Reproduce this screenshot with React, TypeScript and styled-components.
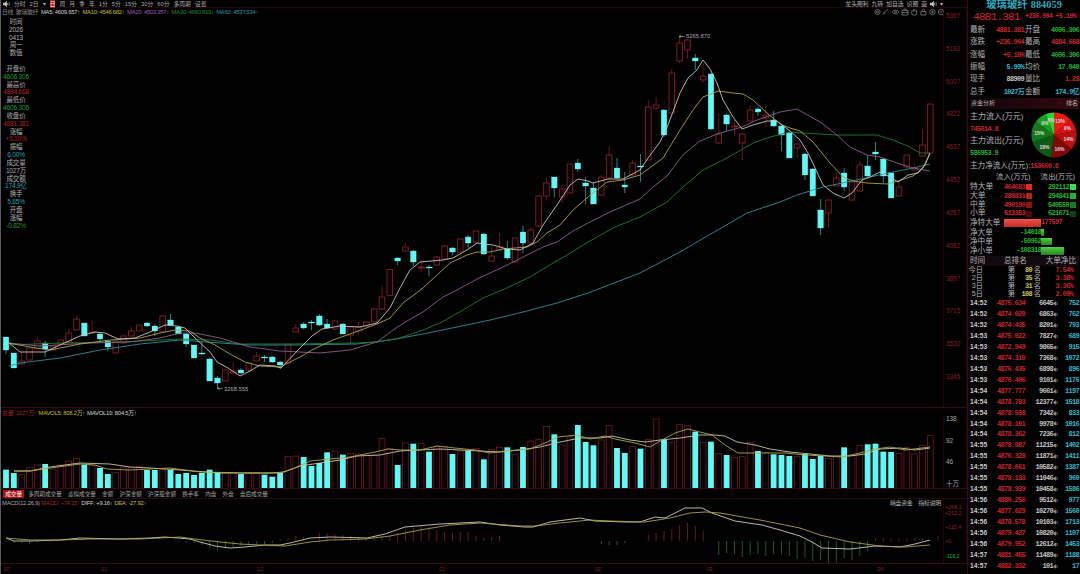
import * as React from "react";
import styled, { createGlobalStyle } from "styled-components";

const RED = "#a3242c";
const GREEN = "#1fae2c";
const CYAN = "#5ffbf6";
const FRAME = "#3a0a10";

const GlobalStyle = createGlobalStyle`
  * { box-sizing: border-box; }
  body {
    margin: 0;
    background: #000;
    overflow: hidden;
    font-family: "Liberation Sans", "Noto Sans CJK SC", sans-serif;
  }
`;

/* ---------- data ---------- */

// kind, body top, body bottom, high, low, volume bar top
type Candle = [string, number, number, number, number, number];

const candles: Candle[] = [
  ["d", 337, 350, 337, 354, 194], ["d", 353, 368, 353, 368, 204], ["u", 361, 364, 352, 365, 208],
  ["u", 348, 360, 348, 360, 187], ["u", 341, 349, 337, 349, 180], ["d", 343, 349, 341, 357, 177],
  ["u", 346, 350, 346, 350, 192], ["u", 340, 344, 339, 344, 180], ["u", 333, 342, 329, 342, 168],
  ["u", 319, 330, 316, 331, 160], ["d", 323, 336, 323, 336, 179], ["u", 332, 333, 321, 333, 182],
  ["d", 334, 339, 332, 342, 189], ["d", 341, 347, 341, 351, 207], ["u", 341, 353, 340, 354, 203],
  ["u", 336, 343, 335, 343, 187], ["u", 331, 336, 327, 336, 187], ["u", 325, 331, 325, 331, 185],
  ["d", 323, 326, 322, 327, 195], ["d", 326, 331, 324, 336, 195], ["u", 316, 332, 315, 333, 195],
  ["d", 320, 325, 314, 325, 195], ["d", 327, 334, 326, 334, 207], ["d", 334, 344, 333, 347, 204],
  ["d", 345, 358, 345, 358, 210], ["d", 353, 354, 342, 355, 204], ["d", 359, 381, 358, 381, 194],
  ["d", 378, 383, 376, 388, 201], ["u", 370, 381, 370, 381, 203], ["u", 371, 373, 363, 373, 203],
  ["d", 370, 373, 368, 374, 207], ["u", 363, 370, 363, 372, 203], ["u", 356, 361, 352, 361, 203],
  ["d", 357, 358, 355, 362, 209], ["d", 357, 362, 356, 363, 215], ["d", 362, 365, 361, 369, 204],
  ["u", 344, 363, 344, 363, 155], ["u", 328, 332, 324, 332, 153], ["d", 324, 328, 322, 329, 156],
  ["d", 322, 323, 320, 330, 183], ["d", 316, 325, 314, 326, 174], ["d", 324, 328, 319, 329, 142],
  ["u", 321, 329, 320, 330, 138], ["d", 324, 334, 323, 334, 149], ["u", 327, 335, 327, 344, 145],
  ["u", 327, 331, 322, 334, 147], ["u", 322, 326, 321, 326, 150], ["u", 309, 322, 308, 322, 150],
  ["u", 297, 309, 285, 310, 100], ["u", 269.5, 295.5, 269, 296, 130], ["d", 258, 261, 257, 265, 180],
  ["u", 247, 251, 243, 252, 114], ["d", 251, 262, 250, 266, 116], ["u", 267, 268, 260, 272, 115],
  ["d", 267, 268, 265, 276, 140], ["u", 257, 265, 256, 266, 125], ["u", 246, 259, 245, 260, 125],
  ["d", 248, 252, 247, 255, 147], ["u", 239, 252, 238, 252, 138], ["d", 237, 243, 235, 248, 137],
  ["u", 231, 242, 231, 243, 130], ["d", 234, 254, 233, 255, 163], ["u", 256, 261, 246, 261, 133],
  ["u", 247, 250, 233, 250, 127], ["d", 249, 258, 241, 260, 127], ["u", 238, 262, 238, 263, 148],
  ["d", 232, 243, 226, 253, 126], ["u", 230, 243, 227, 243, 108], ["u", 196, 226, 195, 227, 103],
  ["u", 183, 196, 178, 200, 64], ["d", 177, 188, 177, 197, 88], ["u", 189, 197, 185, 203, 120],
  ["u", 164, 193, 164, 194, 95], ["d", 163, 169, 159, 172, 60], ["d", 183, 186, 177, 204, 111],
  ["d", 188, 204, 182, 204, 121], ["u", 177, 195, 175, 196, 105], ["u", 155, 178, 147, 178, 62],
  ["d", 168, 178, 158, 179, 129], ["d", 185, 187, 172, 193, 144], ["u", 163, 175, 160, 176, 125],
  ["d", 166, 167, 154, 182, 131], ["u", 107, 160, 100, 160, 103], ["u", 105, 108, 97, 110, 42],
  ["d", 110, 135, 109, 137, 103], ["u", 73, 113, 69, 113, 112], ["u", 43, 61, 36, 63, 58],
  ["u", 40, 50, 39, 59, 62], ["d", 58, 61, 54, 70, 80], ["u", 76, 80, 63, 83, 112],
  ["d", 74, 129, 73, 130, 110], ["u", 134, 143, 113, 144, 145], ["d", 115, 124, 113, 131, 150],
  ["u", 126, 127, 120, 136, 157], ["u", 134, 143, 133, 160, 155], ["u", 110, 121, 105, 121, 112],
  ["d", 109, 112, 107, 116, 138], ["u", 115, 118, 105, 127, 143], ["d", 120, 126, 111, 127, 148],
  ["d", 126, 135, 125, 151, 150], ["d", 133, 158, 132, 158, 153], ["u", 144, 148, 143, 158, 155],
  ["d", 154, 175, 153, 180, 147], ["d", 169, 196, 168, 196, 162], ["d", 210, 228, 199, 235, 153],
  ["u", 200, 213, 199, 228, 160], ["u", 178, 186, 172, 187, 155], ["d", 173, 187, 168, 191, 127],
  ["u", 182, 200, 182, 201, 150], ["u", 165, 191, 161, 191, 122], ["d", 166, 176, 155, 177, 118],
  ["d", 152, 154, 142, 160, 116], ["d", 159, 176, 159, 183, 140], ["d", 173, 198, 173, 198, 141],
  ["u", 187, 196, 180, 196, 145], ["u", 155, 167, 155, 168, 128], ["u", 168, 170, 164, 171, 147],
  ["u", 145, 156, 129, 157, 122], ["u", 104, 153, 104, 153, 92],
];

const candleX = (i: number) => 6 + i * 7.833;

const averages = [
  { color: "#2f8f9c", points: "9,366 20,363 60,358 100,350 140,344 180,340 220,343 250,345 290,345 357,344 390,340 423,334 457,327 490,320 523,312 557,303 588,293 640,273 680,252 702,239 723,227 747,213 780,202 797,195 823,187 847,182 870,177 893,172 913,168 930,164" },
  { color: "#1f7a30", points: "9,345 60,343 120,342 180,339 210,340 240,344 290,344 357,343 377,342 400,338 423,330 440,323 463,310 483,298 507,288 530,277 553,263 567,255 588,242 615,227 640,217 667,202 683,187 703,170 727,158 753,143 770,137 790,132 803,133 837,135 877,135 893,140 910,147 920,153 930,153" },
  { color: "#8d5c92", points: "9,343 40,346 90,343 130,342 160,338 180,333 195,333 220,338 250,347 280,351 320,353 350,350 360,347 377,342 393,330 407,321 423,312 443,297 457,290 477,279 503,267 523,257 543,247 557,242 573,231 588,223 610,212 640,199 653,187 667,176 683,155 700,141 717,134 742,127 757,120 780,112 797,109 820,122 837,135 850,147 867,155 880,157 897,163 913,168 930,171" },
  { color: "#a9a34c", points: "9,343 30,347 50,350 80,344 110,340 140,338 160,333 175,330 190,331 200,338 215,345 230,354 245,362 260,366 280,367 300,357 312,350 333,340 350,334 377,324 390,318 403,303 423,288 437,275 450,263 467,255 477,252 490,252 503,249 527,247 537,242 547,233 560,225 573,210 588,197 607,182 623,180 640,175 663,158 680,130 693,110 703,97 718,91 733,93 743,94 753,100 767,113 780,124 790,128 800,131 813,142 830,163 843,177 853,181 867,183 887,184 898,181 913,176 923,168 930,153" },
  { color: "#c9c3bd", points: "9,343 20,352 45,352 60,345 80,336 95,332 105,333 118,339 135,338 150,332 165,325 177,326 185,328 195,338 210,352 217,362 228,368 240,376 250,371 260,365 275,366 281,368 300,348 312,336 322,329 340,326 360,327 377,323 390,308 400,288 410,270 420,262 443,260 453,258 467,250 477,243 493,245 507,249 520,250 533,243 543,225 557,205 570,185 578,179 588,181 593,183 608,179 623,179 640,170 648,158 660,142 668,125 680,93 688,78 697,70 703,60 710,69 717,83 723,100 733,117 742,129 753,125 767,121 777,121 790,131 800,140 808,153 817,172 823,185 833,193 844,198 852,193 862,180 870,177 880,172 890,177 898,182 908,175 918,173 925,165 930,153" },
];

const volumeAverages = [
  { color: "#c8c6a8", points: "14,471 30,471 50,467 80,463 110,464 130,467 150,468 180,470 220,473 270,473 284,472 300,466 320,463 340,460 357,456 380,455 400,451 420,450 440,449 460,450 480,451 500,452 520,450 540,447 560,442 580,438 600,438 612,436 630,440 645,442 660,440 680,438 700,435 715,435 725,436 737,442 755,445 770,449 790,452 810,454 830,456 850,456 865,454 880,449 900,448 915,450 930,448" },
  { color: "#aaa74a", points: "14,471 30,471 50,468 80,464 95,465 107,469 130,470 170,468 200,472 250,473 280,473 295,468 310,461 330,459 350,457 375,452 388,449 400,450 420,450 437,446 455,448 475,450 490,453 505,451 530,449 545,443 558,437 577,435 590,439 605,436 615,439 635,443 650,447 662,440 675,433 688,429 700,432 712,435 725,445 738,453 765,453 785,453 805,455 825,456 842,457 860,453 875,449 890,447 905,450 930,447" },
];

const diffLine = "6,538 14,541 30,541 60,540 80,538 120,539 150,538 165,537 190,539 200,542 215,546 230,548 245,547 265,545 280,545 290,543 310,538 330,537 367,538 385,534 405,527 440,524 480,522 500,525 525,527 533,527 550,522 580,518 595,521 625,522 640,522 655,517 665,518 675,513 685,508 702,508 712,513 735,521 762,525 780,530 800,536 812,542 822,548 850,549 875,546 900,547 915,544 930,540";
const deaLine = "6,538 30,540 60,540 90,539 140,539 180,537 195,539 220,542 240,544 260,545 285,546 310,542 330,540 365,539 390,536 420,530 450,525 480,523 520,526 535,526 560,523 590,520 610,521 645,522 670,518 690,513 705,512 720,513 760,520 800,528 820,535 850,542 880,546 905,547 930,545";

// first candle index, then the offsets from the zero line (positive is up)
const macdBars: [number, number[]][] = [
  [0, [-1, -2, -2, -3, -1]],
  [22, [-1, -2, -2, -4, -7, -9, -8, -6, -5, -4, -3, -3, -2, 2, 3, 5, 4]],
  [40, [8, 8, 7, 6, 5, 4, 3, 3, 5, 6, 8, 11, 13, 15, 14, 11, 9, 8, 9, 9, 5, 4, 4, 5]],
  [76, [-3, -4, -4, -2]],
  [82, [6, 8, 10, 12, 16, 18, 15, 10, 0, -14, -12, -13, -16, -14, -13, -15, -13, -13, -15, -18, -17, -20, -19, -24, -22, -17, -19, -15, -10, 3, 3, 3, 3, 3, 3, 3, 0, 5, 8]],
];

const periods = ["分时", "2日", "▾", "日", "周", "月", "季", "年", "1分", "5分", "15分", "30分", "60分", "多周期", "设置"];

const legend = [
  ["日线", "#8d8d8d"], ["玻璃玻纤", "#8d8d8d"], ["MA5: 4609.657↑", "#d2d2d2"], ["MA10: 4546.682↑", "#c2bf2c"],
  ["MA20: 4503.357↑", "#a455ba"], ["MA30: 4660.919↓", "#1f8a30"], ["MA60: 4537.534↑", "#2f93a8"],
];

const cursorLines = [
  ["时间", "w"], ["2026", "w"], ["0413", "w"], ["周一", "w"], ["数值", "w"], ["", "w"], ["开盘价", "w"], ["4606.306", "g"],
  ["最高价", "w"], ["4884.668", "r"], ["最低价", "w"], ["4606.306", "g"], ["收盘价", "w"], ["4881.381", "r"], ["涨幅", "w"],
  ["+5.10%", "r"], ["振幅", "w"], ["6.00%", "c"], ["成交量", "w"], ["1027万", "w"], ["成交额", "w"], ["174.9亿", "c"],
  ["换手", "w"], ["5.65%", "c"], ["开盘", "w"], ["涨幅", "w"], ["-0.82%", "g"],
];

const priceAxis = ["5367", "5192", "5007", "4822", "4637", "4452", "4267", "4082", "3897", "3715", "3530", "3345"];

const indicatorTabs = ["成交量", "多周期成交量", "虚拟成交量", "金额", "沪深金额", "沪深股金额", "换手率", "内盘", "外盘", "盘后成交量"];

const quotes = [
  ["最新", "4881.381", "r", "开盘", "4606.306", "g"],
  ["涨跌", "+236.904", "r", "最高", "4884.668", "r"],
  ["涨幅", "+5.10%", "r", "最低", "4606.306", "g"],
  ["振幅", "5.99%", "c", "均价", "17.040", "g"],
  ["现手", "88909", "w", "量比", "1.28", "r"],
  ["总手", "1027万", "c", "金额", "174.9亿", "c"],
];

const orderFlow = [
  ["特大单", "464683", "#e02a24", "292112", "#3be048"],
  ["大单", "280831", "#b81f1c", "294841", "#25b030"],
  ["中单", "490190", "#8a1512", "540550", "#167a1e"],
  ["小单", "513353", "#4a0c0a", "621671", "#0d4212"],
];

const netFlow = [
  { label: "净特大单", value: "177597", left: 37, right: 0 },
  { label: "净大单", value: "-14018", left: 0, right: 3 },
  { label: "净中单", value: "-50962", left: 0, right: 11 },
  { label: "净小单", value: "-108318", left: 0, right: 23 },
];

const ranks = [
  ["今日", "80", "7.54%"], ["2日", "35", "3.38%"], ["3日", "31", "3.36%"], ["5日", "108", "2.09%"],
];

const ticks = [
  ["14:52", "4875.634", "6645", "752"], ["14:52", "4874.020", "6863", "762"], ["14:52", "4874.435", "8201", "793"],
  ["14:53", "4875.022", "7827", "689"], ["14:53", "4872.949", "9865", "915"], ["14:53", "4874.310", "7368", "1072"],
  ["14:53", "4876.435", "6898", "896"], ["14:53", "4876.406", "9101", "1176"], ["14:54", "4877.777", "9661", "1197"],
  ["14:54", "4878.783", "12377", "1518"], ["14:54", "4878.508", "7342", "833"], ["14:54", "4878.101", "9978", "1016"],
  ["14:54", "4878.362", "7236", "812"], ["14:55", "4878.087", "11215", "1402"], ["14:55", "4876.328", "11871", "1411"],
  ["14:55", "4878.661", "10582", "1387"], ["14:55", "4878.133", "11046", "960"], ["14:55", "4878.939", "10458", "1586"],
  ["14:56", "4880.256", "9512", "977"], ["14:56", "4877.629", "10270", "1560"], ["14:56", "4878.578", "10103", "1713"],
  ["14:56", "4879.437", "10820", "1107"], ["14:56", "4879.952", "12612", "1453"], ["14:57", "4881.455", "11489", "1188"],
  ["14:57", "4882.332", "101", "17"],
];

const slices = [
  [13, "#f01818"], [9, "#d81414"], [14, "#b81010"], [16, "#7c0a0a"],
  [18, "#0d5a14"], [15, "#13781b"], [9, "#1a9c24"], [6, "#28d834"],
] as [number, string][];

/* ---------- layout ---------- */

const tones: Record<string, string> = { r: "#c4262e", g: "#22b032", c: "#35b6cc", w: "#c4c4c4", y: "#c9c56a" };

const Screen = styled.div`
  display: flex;
  width: 1080px;
  height: 574px;
  background: #000;
  color: #b4b4b4;
  white-space: nowrap;
`;

const ChartColumn = styled.main`
  width: 967px;
  display: flex;
  flex-direction: column;
  border-left: 1px solid #5a5a60;
`;

const Toolbar = styled.header`
  height: 8px;
  padding: 0 24px 0 2px;
  display: flex;
  align-items: center;
  justify-content: space-between;
  font-size: 5.8px;
  line-height: 8px;
  border-bottom: 1px solid #22060a;
`;

const Group = styled.div<{ $gap: number }>`
  display: flex;
  align-items: center;
  gap: ${props => props.$gap}px;
`;

const Period = styled.span<{ $active?: boolean }>`
  color: ${props => (props.$active ? "#fff" : "#a8a8a8")};
  background: ${props => (props.$active ? "#b3201c" : "transparent")};
`;

const Legend = styled.div`
  height: 8px;
  padding: 0 23px 0 1px;
  display: flex;
  align-items: center;
  justify-content: space-between;
  font-size: 5.9px;
  letter-spacing: -0.28px;
  line-height: 8px;
`;

const Tinted = styled.span<{ $color: string }>`
  color: ${props => props.$color};
`;

const Pane = styled.section<{ $height: number }>`
  position: relative;
  display: flex;
  height: ${props => props.$height}px;
  border-bottom: 1px solid ${FRAME};
`;

const Plot = styled.svg`
  display: block;
  flex: none;
  width: 942px;
  height: 100%;
`;

const Axis = styled.div<{ $color: string }>`
  flex: 1;
  display: flex;
  flex-direction: column;
  justify-content: space-between;
  padding: 0 0 0 2px;
  border-left: 1px solid #24060a;
  border-right: 1px solid #1c0508;
  font-size: 6.4px;
  line-height: 8px;
  color: ${props => props.$color};
`;

const PriceAxis = styled(Axis)`
  padding-bottom: 26px;
  margin-top: -4px;
`;

const VolumeAxis = styled(Axis)`
  margin-top: -2px;
`;

const MacdAxis = styled(Axis)`
  justify-content: flex-start;
  margin-top: -4px;
  padding-left: 1px;
  font-size: 5.7px;
  letter-spacing: -0.2px;
`;

const AxisMark = styled.span<{ $height: number }>`
  flex: none;
  height: ${props => props.$height}px;
`;

const CursorPanel = styled.aside`
  position: absolute;
  left: 0;
  top: 2px;
  width: 30px;
  display: flex;
  flex-direction: column;
  align-items: center;
  font-size: 6.5px;
  letter-spacing: -0.15px;
`;

const CursorLine = styled.div<{ $tone: string }>`
  height: 7.83px;
  line-height: 7.83px;
  color: ${props => tones[props.$tone]};
  opacity: 0.88;
`;

const PaneHeader = styled.div<{ $height: number }>`
  height: ${props => props.$height}px;
  padding: 0 26px 0 1px;
  display: flex;
  align-items: center;
  justify-content: space-between;
  font-size: 5.9px;
  letter-spacing: -0.25px;
  line-height: 8px;
`;

const Tabs = styled.nav`
  height: 10px;
  padding: 1px 0 0 2px;
  display: flex;
  align-items: center;
  border-bottom: 1px solid #2a070c;
  font-size: 5.6px;
  line-height: 8px;
`;

const Tab = styled.span<{ $active?: boolean }>`
  padding: 0 2.2px;
  margin-right: 1.8px;
  color: ${props => (props.$active ? "#fff" : "#a4a4a4")};
  background: ${props => (props.$active ? "#a5120f" : "transparent")};
`;

const Dates = styled.footer`
  flex: 1;
  display: flex;
  align-items: center;
  padding-left: 2px;
  font-size: 6px;
  line-height: 8px;
  color: #7d1c2c;
`;

const DateLabel = styled.span<{ $width: number }>`
  width: ${props => props.$width}px;
`;

const Side = styled.aside`
  width: 113px;
  padding: 0 1px 0 2px;
  border-left: 1px solid ${FRAME};
  display: flex;
  flex-direction: column;
  font-size: 7.6px;
`;

const Row = styled.div<{ $height: number }>`
  flex: none;
  height: ${props => props.$height}px;
  line-height: ${props => props.$height}px;
  display: flex;
  align-items: center;
`;

const Title = styled(Row)`
  justify-content: center;
  gap: 3px;
  padding-right: 1px;
  color: #2ba9bd;
  font-family: "Liberation Serif", "Noto Sans CJK SC", serif;
  font-size: 10.4px;
  font-weight: bold;
`;

const Num = styled.span<{ $tone?: string; $size?: number }>`
  font-family: "Liberation Mono", "Noto Sans CJK SC", monospace;
  font-size: ${props => props.$size || 7}px;
  letter-spacing: -0.1em;
  font-weight: bold;
  text-align: right;
  color: ${props => tones[props.$tone || "w"]};
`;

const PriceRow = styled(Row)`
  justify-content: space-between;
  padding: 0 3px 0 3px;
`;

const Price = styled(Num)`
  font-weight: normal;
`;

const QuoteRow = styled(Row)`
  display: grid;
  grid-template-columns: 16px 38px 1px 15px 1fr;
`;

const SectionBar = styled(Row)`
  justify-content: space-between;
  padding: 0 1px;
  font-size: 6px;
  background: linear-gradient(90deg, #10050a, #35070f);
`;

const FlowSummary = styled.div`
  height: 52px;
  padding-top: 2px;
  display: flex;
  font-size: 8px;
`;

const FlowText = styled.div`
  width: 61px;
  flex: none;
`;

const Pie = styled.svg`
  width: 46px;
  height: 46px;
  margin-top: 1.5px;
`;

const FlowHeader = styled(Row)`
  justify-content: space-between;
  padding: 0 4px 0 26px;
  font-size: 7.4px;
`;

const FlowRow = styled(Row)`
  display: grid;
  grid-template-columns: 24px 31px 7px 37px 7px;
  font-size: 7.8px;
`;

const Swatch = styled.i<{ $color: string }>`
  width: 5.5px;
  height: 6px;
  margin-left: 1px;
  background: ${props => props.$color};
`;

const NetRow = styled(Row)`
  display: grid;
  grid-template-columns: 34px 37px 1fr;
`;

const NetCell = styled.div<{ $end?: boolean }>`
  height: 100%;
  display: flex;
  align-items: center;
  justify-content: ${props => (props.$end ? "flex-end" : "flex-start")};
`;

const NetBar = styled.div<{ $positive?: boolean }>`
  height: 7.4px;
  background: ${props => (props.$positive ? "linear-gradient(#f0524a, #c22a22)" : "linear-gradient(#55cc48, #23851d)")};
`;

const RankHeader = styled(Row)`
  justify-content: space-between;
  padding-right: 3px;
  background: #120a0e;
`;

const RankRow = styled(Row)`
  display: grid;
  grid-template-columns: 13px 32px 17px 9px 1fr;
  justify-items: end;
  padding-right: 6px;
  font-size: 7.2px;
`;

const TickRow = styled(Row)`
  display: grid;
  grid-template-columns: 18px 37px 28px 7px 1fr;
`;

const TickTime = styled.span`
  font-size: 6.7px;
  font-weight: bold;
  color: #c8c8c8;
`;

/* ---------- parts ---------- */

const Speaker = () => (
  <svg width="7" height="6" viewBox="0 0 8 6">
    <path d="M0 2h2l2-2v6l-2-2H0z M5 1.5v3 M7 1v4" fill="#d0d0d0" stroke="#d0d0d0" strokeWidth=".7" />
  </svg>
);

const TickArrow = () => (
  <svg width="6" height="5" viewBox="0 0 6 5">
    <path d="M0.500 2.500L2.500 .8V4.200zM2.500 1.800H5M2.500 3.200H5" fill="#9a9a9a" stroke="#9a9a9a" strokeWidth=".6" />
  </svg>
);

const ToolIcons = () => (
  <svg width="70" height="8" viewBox="0 0 70 8" fill="none" stroke="#8c8c8c" strokeWidth=".7">
    <circle cx="3.5" cy="4" r="2.6" />
    <circle cx="3.5" cy="4" r="1" />
    <path d="M9 6.5l1-2 4-3.3M10 4.8l1 .8" />
    <path d="M18 4q3.5-4 7 0q-3.5 4-7 0z" />
    <circle cx="21.5" cy="4" r="1" />
    <path d="M28 2.5h6v4.5h-6zM29.5 2.5l.5-1.5h2l.5 1.5M28 4.5h6" />
    <path d="M38 4v-2M39.5 3.5v-2.5M41 3.5v-2.5M42.5 4.5v-2.5M37 4l1.5 3h3.5l.8-3" />
    <path d="M47 3.5h5v3.5h-5zM48 3.5v-1.3q1.5-2.4 3 0v1.3" />
    <circle cx="58.5" cy="4" r="2.7" />
    <path d="M57 4h3M58.5 2.5v3" />
    <circle cx="67" cy="4" r="2.7" />
    <path d="M65.5 4h3" />
  </svg>
);

const Candles = () => (
  <>
    {candles.map(([kind, top, bottom, high, low], i) => {
      const x = candleX(i);
      const down = kind === "d";
      const flat = bottom - top <= 1;
      return (
        <g key={i} stroke={down ? "#45b8b4" : "#8c2430"} strokeWidth=".7">
          <path d={`M${x} ${high}V${top}M${x} ${bottom}V${low}`} />
          <rect
            x={x - 2.8}
            y={top}
            width={flat ? 6 : 5.6}
            height={Math.max(bottom - top, 1)}
            fill={down ? CYAN : "#0a0103"}
            stroke={down ? CYAN : "#8c2430"}
            strokeWidth={down ? 0.3 : 0.8}
          />
        </g>
      );
    })}
  </>
);

const VolumeBars = () => (
  <>
    {candles.map(([kind, , , , , volume], i) => {
      const top = 405 + volume / 3;
      const down = kind === "d";
      return (
        <rect
          key={i}
          x={candleX(i) - 2.9}
          y={top}
          width="5.8"
          height={488.3 - top}
          fill={down ? CYAN : "#080103"}
          stroke={down ? "none" : "#7a1c28"}
          strokeWidth=".7"
        />
      );
    })}
  </>
);

const MacdBars = () => (
  <g strokeWidth=".7">
    {macdBars.map(([start, values]) => values.map((value, i) => {
      const x = candleX(start + i);
      return (
        <path
          key={start + i}
          d={`M${x} 541V${541 - value}`}
          stroke={value > 0 ? "#8c2430" : "#2c8038"}
        />
      );
    }))}
  </g>
);

const FlowPie = () => {
  let angle = -Math.PI / 2;
  return (
    <Pie viewBox="-23 -23 46 46">
      {slices.map(([percent, color], i) => {
        const next = angle + (percent / 100) * Math.PI * 2;
        const mid = (angle + next) / 2;
        const arc = `M0 0L${22.5 * Math.cos(angle)} ${22.5 * Math.sin(angle)}A22.5 22.5 0 0 1 ${22.5 * Math.cos(next)} ${22.5 * Math.sin(next)}Z`;
        angle = next;
        return (
          <g key={i}>
            <path d={arc} fill={color} />
            <text x={15 * Math.cos(mid)} y={15 * Math.sin(mid) + 2} fontSize="5" fontWeight="bold" fill="#e4d8d8" textAnchor="middle">
              {percent}%
            </text>
          </g>
        );
      })}
    </Pie>
  );
};

const SidePanel = () => (
  <Side>
    <Title $height={9}><span>玻璃玻纤</span><span>884059</span></Title>
    <PriceRow $height={15}>
      <Price $tone="r" $size={11.6}>4881.381</Price>
      <Num $tone="r" $size={6.8}>+236.904 +5.10%</Num>
    </PriceRow>
    {quotes.map(([label, value, tone, label2, value2, tone2]) => (
      <QuoteRow key={label} $height={12.35}>
        <span>{label}</span>
        <Num $tone={tone}>{value}</Num>
        <i />
        <span>{label2}</span>
        <Num $tone={tone2}>{value2}</Num>
      </QuoteRow>
    ))}
    <SectionBar $height={10.5}>
      <span>资金分析</span>
      <Group $gap={5}><Tinted $color={RED}>↑</Tinted><span>排名</span></Group>
    </SectionBar>
    <FlowSummary>
      <FlowText>
        <Row $height={12.3}>主力流入(万元)</Row>
        <Row $height={12.3}><Num $tone="r">745614.8</Num></Row>
        <Row $height={12.3}>主力流出(万元)</Row>
        <Row $height={12.3}><Num $tone="g">586953.9</Num></Row>
      </FlowText>
      <FlowPie />
    </FlowSummary>
    <Row $height={10.5}>主力净流入(万元):<Num $tone="r">158660.8</Num></Row>
    <FlowHeader $height={12}><span>流入(万元)</span><span>流出(万元)</span></FlowHeader>
    {orderFlow.map(([label, inflow, inColor, outflow, outColor]) => (
      <FlowRow key={label} $height={8.8}>
        <span>{label}</span>
        <Num $tone="r">{inflow}</Num>
        <Swatch $color={inColor} />
        <Num $tone="g">{outflow}</Num>
        <Swatch $color={outColor} />
      </FlowRow>
    ))}
    {netFlow.map(item => (
      <NetRow key={item.label} $height={9.4}>
        <span>{item.label}</span>
        <NetCell $end>
          {item.left ? <NetBar $positive style={{ width: item.left }} /> : <Num $tone="g">{item.value}</Num>}
        </NetCell>
        <NetCell>
          {item.right ? <NetBar style={{ width: item.right }} /> : <Num $tone="r">{item.value}</Num>}
        </NetCell>
      </NetRow>
    ))}
    <RankHeader $height={10}><span>时间</span><span>总排名</span><span>大单净比</span></RankHeader>
    {ranks.map(([label, rank, ratio]) => (
      <RankRow key={label} $height={8.1}>
        <span>{label}</span>
        <span>第</span>
        <Num $tone="y">{rank}</Num>
        <span>名</span>
        <Num $tone="r">{ratio}</Num>
      </RankRow>
    ))}
    {ticks.map(([time, price, lots, count], i) => (
      <TickRow key={i} $height={10.94}>
        <TickTime>{time}</TickTime>
        <Num $tone="r">{price}</Num>
        <Num>{lots}</Num>
        <TickArrow />
        <Num $tone="c">{count}</Num>
      </TickRow>
    ))}
  </Side>
);

export default () => {
  return (
    <Screen>
      <GlobalStyle />
      <ChartColumn>
        <Toolbar>
          <Group $gap={4}>
            <Speaker />
            {periods.map(name => <Period key={name} $active={name === "日"}>{name}</Period>)}
          </Group>
          <Group $gap={3}>
            <span>龙头图利</span><span>九转</span><span>加自选</span><span>识图</span><span>画</span>
            <Speaker />
            <span>▾</span>
          </Group>
        </Toolbar>
        <Legend>
          <Group $gap={2.6}>
            {legend.map(([text, color]) => <Tinted key={text} $color={color}>{text}</Tinted>)}
          </Group>
          <ToolIcons />
        </Legend>
        <Pane $height={392}>
          <Plot viewBox="1 16 942 391" preserveAspectRatio="none">
            <Candles />
            {averages.map(line => (
              <polyline key={line.color} points={line.points} fill="none" stroke={line.color} strokeWidth=".9" />
            ))}
            <path d="M679 36.5h6M681 35l-2 1.5 2 1.5M217.5 388.5h5M219.5 387l-2 1.5 2 1.5" fill="none" stroke="#a8a8a8" strokeWidth=".7" />
            <text x="686" y="38" fontSize="5.8" fill="#a8a8a8">5265.870</text>
            <text x="224" y="391" fontSize="5.8" fill="#a8a8a8">3268.555</text>
          </Plot>
          <PriceAxis $color="#8a1d28">
            {priceAxis.map(price => <span key={price}>{price}</span>)}
          </PriceAxis>
          <CursorPanel>
            {cursorLines.map(([text, tone], i) => <CursorLine key={i} $tone={tone}>{text}</CursorLine>)}
          </CursorPanel>
        </Pane>
        <PaneHeader $height={9}>
          <Group $gap={2}>
            <Tinted $color={RED}>总量: 1027万↑</Tinted>
            <Tinted $color="#c2bf2c">MAVOL5: 808.2万↑</Tinted>
            <Tinted $color="#d2d2d2">MAVOL10: 804.5万↑</Tinted>
          </Group>
        </PaneHeader>
        <Pane $height={72}>
          <Plot viewBox="1 417 942 71" preserveAspectRatio="none">
            <VolumeBars />
            {volumeAverages.map(line => (
              <polyline key={line.color} points={line.points} fill="none" stroke={line.color} strokeWidth=".9" />
            ))}
          </Plot>
          <VolumeAxis $color="#a8a8a8">
            <span>138</span><span>92</span><span>46</span><span>十万</span>
          </VolumeAxis>
        </Pane>
        <Tabs>
          {indicatorTabs.map(name => <Tab key={name} $active={name === "成交量"}>{name}</Tab>)}
        </Tabs>
        <PaneHeader $height={8}>
          <Group $gap={1.6}>
            <Tinted $color="#a8a8a8">MACD(12,26,9)</Tinted>
            <Tinted $color={RED}>MACD: +74.15↑</Tinted>
            <Tinted $color="#d2d2d2">DIFF: +9.16↑</Tinted>
            <Tinted $color="#c2bf2c">DEA: -27.92↑</Tinted>
          </Group>
          <Group $gap={6}><span>暗盘资金</span><span>指标说明</span></Group>
        </PaneHeader>
        <Pane $height={57}>
          <Plot viewBox="1 507 942 56" preserveAspectRatio="none">
            <MacdBars />
            <polyline points={diffLine} fill="none" stroke="#c9c9c4" strokeWidth=".9" />
            <polyline points={deaLine} fill="none" stroke="#a5a344" strokeWidth=".9" />
          </Plot>
          <MacdAxis $color="#8a1d28">
            <AxisMark $height={6}>+268.1</AxisMark>
            <AxisMark $height={14}>+252.2</AxisMark>
            <AxisMark $height={14}>+115.4</AxisMark>
            <AxisMark $height={15}>+0</AxisMark>
            <Tinted $color={GREEN}>-116.2</Tinted>
          </MacdAxis>
        </Pane>
        <Dates>
          <DateLabel $width={98}>10</DateLabel>
          <DateLabel $width={156}>11</DateLabel>
          <DateLabel $width={182}>12</DateLabel>
          <DateLabel $width={156}>01</DateLabel>
          <DateLabel $width={111}>02</DateLabel>
          <DateLabel $width={171}>03</DateLabel>
          <DateLabel $width={20}>04</DateLabel>
        </Dates>
      </ChartColumn>
      <SidePanel />
    </Screen>
  );
};
